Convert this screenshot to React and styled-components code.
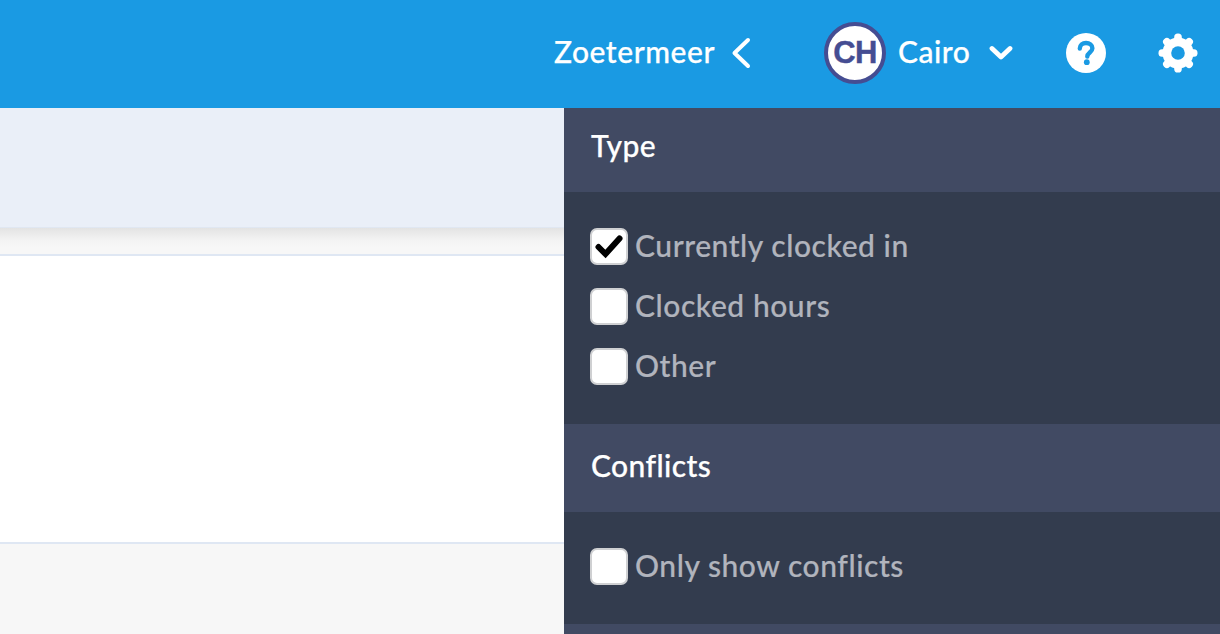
import React from "react";
import styled, { createGlobalStyle } from "styled-components";

const Global = createGlobalStyle`
  html, body { margin: 0; padding: 0; height: 100%; overflow: hidden; background: #f7f7f7; }
  body { font-family: Lato, "Open Sans", sans-serif; -webkit-font-smoothing: antialiased; }
`;

const Page = styled.div`
  width: 1220px;
  height: 634px;
  display: flex;
  flex-direction: column;
  overflow: hidden;
`;

const TopBar = styled.header`
  flex: 0 0 108px;
  height: 108px;
  background: #1a9ae3;
  display: flex;
  align-items: center;
  color: #fff;
  padding: 0 0 3px 554px;
  box-sizing: border-box;
`;

const BarLabel = styled.span`
  font-size: 30px;
  font-weight: 500;
  letter-spacing: 0.55px;
  line-height: 1;
  padding-bottom: 3px;
  -webkit-text-stroke: 0.25px #fff;
`;

const IconSlot = styled.span`
  display: flex;
  align-items: center;
  justify-content: center;
  margin-left: ${(p) => p.$left}px;
  width: ${(p) => p.$size}px;
  height: ${(p) => p.$size}px;
  flex: none;
`;

const Avatar = styled.div`
  width: 62px;
  height: 62px;
  box-sizing: border-box;
  margin-left: 67px;
  margin-right: 12px;
  flex: none;
  border: 4px solid #454d92;
  border-radius: 50%;
  background: #fff;
  color: #454d92;
  display: flex;
  align-items: center;
  justify-content: center;
  font-family: "Liberation Sans", Arial, sans-serif;
  font-size: 31px;
  font-weight: 700;
  letter-spacing: -0.6px;
  -webkit-text-stroke: 0.4px #454d92;
`;

const Body = styled.div`
  flex: 1;
  display: flex;
  min-height: 0;
`;

const Main = styled.main`
  flex: 0 0 564px;
  display: flex;
  flex-direction: column;
  background: #f7f7f7;
`;

const Toolbar = styled.div`
  flex: 0 0 120px;
  background: #eaeff8;
  border-bottom: 1px solid #e0e7f2;
  box-sizing: border-box;
`;

const ShadowGap = styled.div`
  flex: 0 0 26px;
  background: linear-gradient(#e3e3e3 0, #f3f3f3 12px, #f7f7f7 20px);
`;

const Sheet = styled.div`
  flex: 0 0 290px;
  box-sizing: border-box;
  background: #fff;
  border-top: 2px solid #dfe7f3;
  border-bottom: 2px solid #dfe7f3;
`;

const Filters = styled.aside`
  flex: 0 0 656px;
  background: #333c4e;
  display: flex;
  flex-direction: column;
`;

const SectionTitle = styled.h2`
  margin: 0;
  height: ${(p) => p.$height}px;
  flex: none;
  box-sizing: border-box;
  padding: 0 0 ${(p) => p.$lift || 0}px 27px;
  background: #414a63;
  color: #fff;
  font-size: 30px;
  font-weight: 500;
  letter-spacing: 0.4px;
  -webkit-text-stroke: 0.25px #fff;
  display: flex;
  align-items: center;
`;

const OptionList = styled.div`
  flex: none;
  height: ${(p) => p.$height}px;
  box-sizing: border-box;
  padding: 35px 0 0 26px;
  display: flex;
  flex-direction: column;
  gap: 22px;
`;

const Option = styled.label`
  display: flex;
  align-items: center;
  height: 38px;
  color: #b1b4bd;
  font-size: 30px;
  font-weight: 500;
  letter-spacing: 0.55px;
  -webkit-text-stroke: 0.2px #b1b4bd;
`;

const OptionText = styled.span`
  line-height: 1;
  padding-bottom: 3px;
`;

const Box = styled.span`
  width: 38px;
  height: 37px;
  box-sizing: border-box;
  flex: none;
  margin-right: 7px;
  background: #fff;
  border: 2px solid #cfd0d2;
  border-radius: 7px;
  display: flex;
  align-items: center;
  justify-content: center;
`;

const Check = () => (
  <svg width="30" height="26" viewBox="0 0 30 26" fill="none">
    <path d="M4.5 14 L11.5 21 L25.5 5.5" stroke="#000" strokeWidth="6" strokeLinecap="round" strokeLinejoin="miter" />
  </svg>
);

const ChevronLeft = () => (
  <svg width="20" height="32" viewBox="0 0 20 32" fill="none">
    <path d="M17 3 L3.5 16 L17 29" stroke="#fff" strokeWidth="4" strokeLinecap="round" strokeLinejoin="round" />
  </svg>
);

const ChevronDown = () => (
  <svg width="24" height="16" viewBox="0 0 24 16" fill="none">
    <path d="M3 3.5 L12 12 L21 3.5" stroke="#fff" strokeWidth="4.8" strokeLinecap="round" strokeLinejoin="round" />
  </svg>
);

const Help = () => (
  <svg width="40" height="40" viewBox="0 0 40 40">
    <circle cx="20" cy="20" r="20" fill="#fff" />
    <path d="M13.8 15.6 C13.8 11.9 16.6 10 20 10 C23.6 10 26.4 12 26.4 15.2 C26.4 19.4 21.3 19.6 21.3 23.6" fill="none" stroke="#1a9ae3" strokeWidth="4.4" strokeLinecap="round" />
    <circle cx="20.8" cy="29.2" r="2.9" fill="#1a9ae3" />
  </svg>
);

const Gear = () => {
  const teeth = [0, 45, 90, 135, 180, 225, 270, 315];
  return (
    <svg width="40" height="40" viewBox="0 0 40 40">
      <circle cx="20" cy="20" r="15.5" fill="#fff" />
      {teeth.map((a) => (
        <rect key={a} x="16.2" y="0.5" width="7.6" height="10" rx="3.6" fill="#fff" transform={`rotate(${a} 20 20)`} />
      ))}
      <circle cx="20" cy="20" r="6.8" fill="#1a9ae3" />
    </svg>
  );
};

const CheckOption = ({ checked, children }) => (
  <Option>
    <Box>{checked && <Check />}</Box>
    <OptionText>{children}</OptionText>
  </Option>
);

export default function App() {
  return (
    <>
      <Global />
      <Page>
        <TopBar>
          <BarLabel>Zoetermeer</BarLabel>
          <IconSlot $left={10} $size={32}><ChevronLeft /></IconSlot>
          <Avatar>CH</Avatar>
          <BarLabel>Cairo</BarLabel>
          <IconSlot $left={18} $size={26}><ChevronDown /></IconSlot>
          <IconSlot $left={52} $size={40}><Help /></IconSlot>
          <IconSlot $left={52} $size={40}><Gear /></IconSlot>
        </TopBar>
        <Body>
          <Main>
            <Toolbar />
            <ShadowGap />
            <Sheet />
          </Main>
          <Filters>
            <SectionTitle $height={84} $lift={10}>Type</SectionTitle>
            <OptionList $height={232}>
              <CheckOption checked>Currently clocked in</CheckOption>
              <CheckOption>Clocked hours</CheckOption>
              <CheckOption>Other</CheckOption>
            </OptionList>
            <SectionTitle $height={88} $lift={6}>Conflicts</SectionTitle>
            <OptionList $height={112}>
              <CheckOption>Only show conflicts</CheckOption>
            </OptionList>
            <SectionTitle $height={10} />
          </Filters>
        </Body>
      </Page>
    </>
  );
}
